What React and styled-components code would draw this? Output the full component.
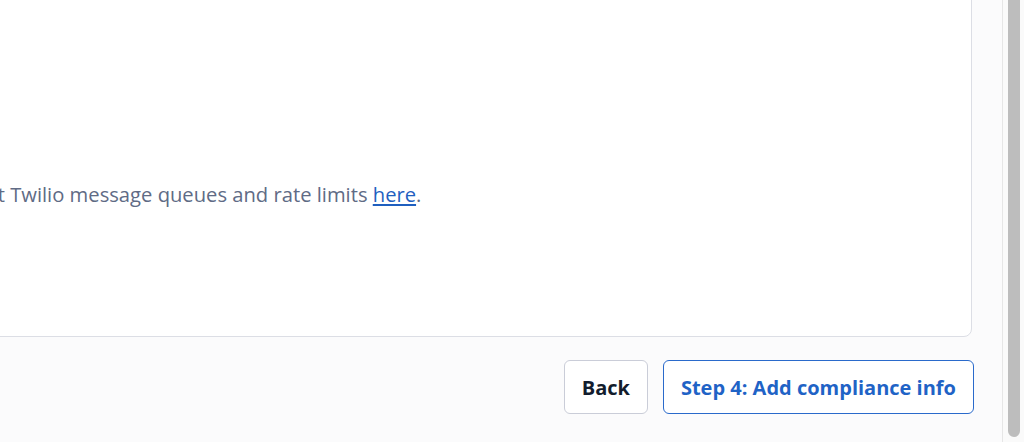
import styled, { createGlobalStyle } from "styled-components";

const GlobalStyle = createGlobalStyle`
  *, *::before, *::after {
    box-sizing: border-box;
  }
  html, body {
    margin: 0;
    padding: 0;
    background: #fbfbfc;
    font-family: "Open Sans", "Liberation Sans", sans-serif;
    overflow: hidden;
  }
`;

export default function App() {
    return (
        <Page>
            <GlobalStyle />
            <Main>
                <Card>
                    <Note>
                        Learn more about Twilio message queues and rate limits <Link href="#">here</Link>.
                    </Note>
                </Card>
                <Footer>
                    <Button>Back</Button>
                    <Button primary>Step 4: Add compliance info</Button>
                </Footer>
            </Main>
            <Scrollbar>
                <Thumb />
            </Scrollbar>
        </Page>
    );
}

const Page = styled.div`
    display: flex;
    height: 442px;
    width: 1024px;
`;

const Main = styled.div`
    flex: 1;
    display: flex;
    flex-direction: column;
    padding-right: 30px;
    overflow: hidden;
`;

const Card = styled.div`
    flex-shrink: 0;
    height: 357px;
    margin-top: -20px;
    margin-left: -190px;
    background: #fff;
    border: 1px solid #dcdee5;
    border-radius: 8px;
    padding: 70px 24px 0;
    display: flex;
    align-items: center;
`;

const Note = styled.p`
    margin: 0;
    font-size: 20.2px;
    color: #606b85;
`;

const Link = styled.a`
    color: #1f5fbf;
    text-decoration: underline;
`;

const Footer = styled.div`
    display: flex;
    justify-content: flex-end;
    gap: 15px;
    margin-top: 23px;
    margin-right: -2px;
`;

const Button = styled.button`
    height: 54px;
    padding: 0 17px;
    border-radius: 6px;
    background: #fff;
    border: 1px solid ${(p) => (p.primary ? "#2a6acb" : "#cacdd8")};
    color: ${(p) => (p.primary ? "#1f63c6" : "#121c2d")};
    font-family: inherit;
    font-size: 20px;
    font-weight: 700;
`;

const Scrollbar = styled.div`
    width: 22px;
    background: #fafafa;
    border-left: 1px solid #e6e6e6;
    display: flex;
    justify-content: center;
    padding-bottom: 5px;
`;

const Thumb = styled.div`
    width: 12px;
    height: 100%;
    background: #bdbdbd;
    border-radius: 0 0 6px 6px;
`;
